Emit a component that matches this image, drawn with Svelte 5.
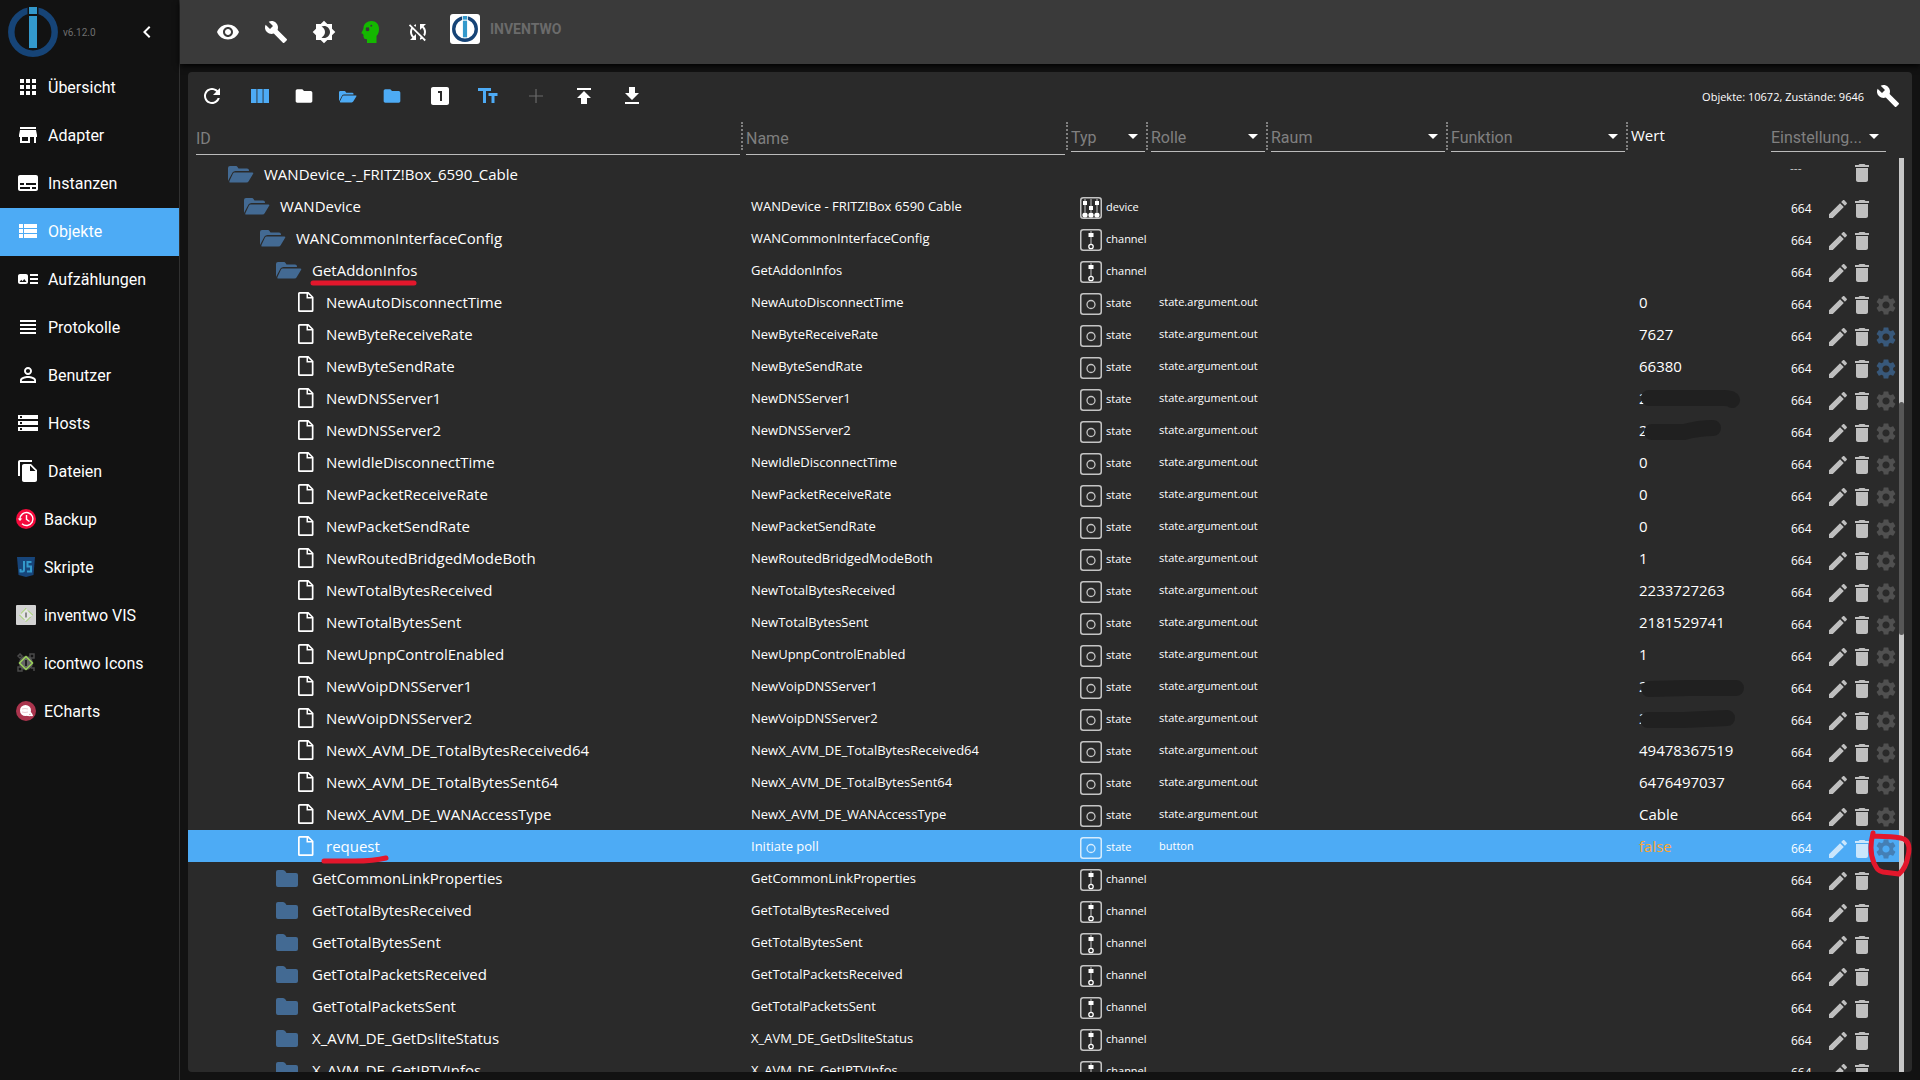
<script>
  const paths = {
    apps: 'M4 8h4V4H4v4zm6 12h4v-4h-4v4zm-6 0h4v-4H4v4zm0-6h4v-4H4v4zm6 0h4v-4h-4v4zm6-10v4h4V4h-4zm-6 4h4V4h-4v4zm6 6h4v-4h-4v4zm0 6h4v-4h-4v4z',
    store: 'M20 4H4v2h16V4zm1 10v-2l-1-5H4l-1 5v2h1v6h10v-6h4v6h2v-6h1zm-9 4H6v-4h6v4z',
    subtitles: 'M20 4H4c-1.1 0-2 .9-2 2v12c0 1.1.9 2 2 2h16c1.1 0 2-.9 2-2V6c0-1.1-.9-2-2-2zM4 12h4v2H4v-2zm10 6H4v-2h10v2zm6 0h-4v-2h4v2zm0-4H10v-2h10v2z',
    list: 'M3 9h4V5H3v4zm0 5h4v-4H3v4zm5 0h13v-4H8v4zm0 5h13v-4H8v4zM3 19h4v-4H3v4zM8 5v4h13V5H8z',
    artTrack: 'M22 13h-8v-2h8v2zm0-6h-8v2h8V7zm-8 10h8v-2h-8v2zm-2-8v6c0 1.1-.9 2-2 2H4c-1.1 0-2-.9-2-2V9c0-1.1.9-2 2-2h6c1.1 0 2 .9 2 2zm-1.5 6l-2.25-3-1.75 2.26-1.25-1.51L3.5 15h7z',
    headline: 'M4 15h16v-2H4v2zm0 4h16v-2H4v2zm0-8h16V9H4v2zm0-6v2h16V5H4z',
    person: 'M12 5.9a2.1 2.1 0 1 1 0 4.2 2.1 2.1 0 0 1 0-4.2m0 9c2.97 0 6.1 1.46 6.1 2.1v1.1H5.9V17c0-.64 3.13-2.1 6.1-2.1M12 4C9.79 4 8 5.79 8 8s1.79 4 4 4 4-1.79 4-4-1.79-4-4-4zm0 9c-2.67 0-8 1.34-8 4v3h16v-3c0-2.66-5.33-4-8-4z',
    storage: 'M2 20h20v-4H2v4zm2-3h2v2H4v-2zM2 4v4h20V4H2zm4 3H4V5h2v2zm-4 7h20v-4H2v4zm2-3h2v2H4v-2z',
    fileCopy: 'M16 1H4c-1.1 0-2 .9-2 2v14h2V3h12V1zm-1 4l6 6v10c0 1.1-.9 2-2 2H7.99C6.89 23 6 22.1 6 21l.01-14c0-1.1.89-2 1.99-2h7zm-1 7h5.5L14 6.5V12z',
    chevron: 'M15.41 7.41L14 6l-6 6 6 6 1.41-1.41L10.83 12z',
    eye: 'M12 4.5C7 4.5 2.73 7.61 1 12c1.73 4.39 6 7.5 11 7.5s9.27-3.11 11-7.5c-1.73-4.39-6-7.5-11-7.5zM12 17c-2.76 0-5-2.24-5-5s2.24-5 5-5 5 2.24 5 5-2.24 5-5 5zm0-8c-1.66 0-3 1.34-3 3s1.34 3 3 3 3-1.34 3-3-1.34-3-3-3z',
    wrench: 'M22.7 19l-9.1-9.1c.9-2.3.4-5-1.5-6.9-2-2-5-2.4-7.4-1.3L9 6 6 9 1.6 4.7C.4 7.1.9 10.1 2.9 12.1c1.9 1.9 4.6 2.4 6.9 1.5l9.1 9.1c.4.4 1 .4 1.4 0l2.3-2.3c.5-.4.5-1.1.1-1.4z',
    brightness: 'M20 8.69V4h-4.69L12 .69 8.69 4H4v4.69L.69 12 4 15.31V20h4.69L12 23.31 15.31 20H20v-4.69L23.31 12 20 8.69zM12 18c-.89 0-1.74-.2-2.5-.55C11.56 16.5 13 14.42 13 12s-1.44-4.5-3.5-5.45C10.26 6.2 11.11 6 12 6c3.31 0 6 2.69 6 6s-2.69 6-6 6z',
    head: 'M12.5 1C8 1 4.5 4 4.5 8.3c0 1.2-2 3.6-2 4.6 0 .6.7.8 1.5.9-.2.9.7 1.1.6 1.7-.4.5-.3 1 .1 1.5.2 2 1.3 2.3 3.3 2.2V23h9.5v-7c1.9-1.8 2.5-4.4 2.5-7 0-4.8-3-8-7.5-8zM7.6 7.2l1 .4.9-.4.7.9-.2 1 .5 1-.9.8-1 .4-1-.3-.9-.8.2-1-.2-1zm4.2-2.5l1 .1.6.8-.4 1-1.1.2-.7-.8z',
    syncOff: 'M10 6.35V4.26c-.8.21-1.55.54-2.23.96l1.46 1.46c.25-.12.5-.24.77-.33zm-7.14-.94l2.36 2.36C4.45 8.99 4 10.44 4 12c0 2.21.91 4.2 2.36 5.64L4 20h6v-6l-2.24 2.24C6.68 15.15 6 13.66 6 12c0-1 .25-1.94.68-2.77l8.08 8.08c-.25.13-.5.25-.77.34v2.09c.8-.21 1.55-.54 2.23-.96l2.36 2.36 1.27-1.27L4.14 4.14 2.86 5.41zM20 4h-6v6l2.24-2.24C17.32 8.85 18 10.34 18 12c0 1-.25 1.94-.68 2.77l1.46 1.46C19.55 15.01 20 13.56 20 12c0-2.21-.91-4.2-2.36-5.64L20 4z',
    refresh: 'M17.65 6.35C16.2 4.9 14.21 4 12 4c-4.42 0-7.99 3.58-7.99 8s3.57 8 7.99 8c3.73 0 6.84-2.55 7.73-6h-2.08c-.82 2.33-3.04 4-5.65 4-3.31 0-6-2.69-6-6s2.69-6 6-6c1.66 0 3.14.69 4.22 1.78L13 11h7V4l-2.35 2.35z',
    folder: 'M10 4H4c-1.1 0-1.99.9-1.99 2L2 18c0 1.1.9 2 2 2h16c1.1 0 2-.9 2-2V8c0-1.1-.9-2-2-2h-8l-2-2z',
    one: 'M19 3H5c-1.1 0-2 .9-2 2v14c0 1.1.9 2 2 2h14c1.1 0 2-.9 2-2V5c0-1.1-.9-2-2-2zm-5 14h-2V9h-2V7h4v10z',
    text: 'M2 4v3h5v12h3V7h5V4H2zm19.5 5h-9v3h3v7h3v-7h3V9z',
    plus: 'M19 12.6h-6.4V19h-1.2v-6.4H5v-1.2h6.4V5h1.2v6.4H19z',
    publish: 'M5 4v2h14V4H5zm0 10h4v6h6v-6h4l-7-7-7 7z',
    download: 'M19 9h-4V3H9v6H5l7 7 7-7zM5 18v2h14v-2H5z',
    arrow: 'M7 10l5 5 5-5z',
    file: 'M14.5 2H5.5Q4 2 4 3.5V20.500Q4 22 5.500 22H18Q19.500 22 19.500 20.500V7zM5.700 20.300V3.700H12.500V8.500H17.800V20.300zM14 3.900L17.300 7.100H14z',
    edit: 'M3 17.25V21h3.75L17.81 9.94l-3.75-3.75L3 17.25zM20.71 7.04c.39-.39.39-1.02 0-1.41l-2.34-2.34c-.39-.39-1.02-.39-1.41 0l-1.83 1.83 3.75 3.75 1.83-1.83z',
    trash: 'M6 19c0 1.1.9 2 2 2h8c1.1 0 2-.9 2-2V7H6v12zM19 4h-3.5l-1-1h-5l-1 1H5v2h14V4z',
    gear: 'M19.14 12.94c.04-.3.06-.61.06-.94 0-.32-.02-.64-.07-.94l2.03-1.58c.18-.14.23-.41.12-.61l-1.92-3.32c-.12-.22-.37-.29-.59-.22l-2.39.96c-.5-.38-1.03-.7-1.62-.94l-.36-2.54c-.04-.24-.24-.41-.48-.41h-3.84c-.24 0-.43.17-.47.41l-.36 2.54c-.59.24-1.13.57-1.62.94l-2.39-.96c-.22-.08-.47 0-.59.22L2.74 8.87c-.12.21-.08.47.12.61l2.03 1.58c-.05.3-.09.63-.09.94s.02.64.07.94l-2.03 1.58c-.18.14-.23.41-.12.61l1.92 3.32c.12.22.37.29.59.22l2.39-.96c.5.38 1.03.7 1.62.94l.36 2.54c.05.24.24.41.48.41h3.84c.24 0 .44-.17.47-.41l.36-2.54c.59-.24 1.13-.56 1.62-.94l2.39.96c.22.08.47 0 .59-.22l1.92-3.32c.12-.22.07-.47-.12-.61l-2.01-1.58zM12 15.6c-1.98 0-3.6-1.62-3.6-3.6s1.62-3.6 3.6-3.6 3.6 1.62 3.6 3.6-1.62 3.6-3.6 3.6z'
  };

  const menu = [
    { label: 'Übersicht', icon: 'apps' },
    { label: 'Adapter', icon: 'store' },
    { label: 'Instanzen', icon: 'subtitles' },
    { label: 'Objekte', icon: 'list' },
    { label: 'Aufzählungen', icon: 'artTrack' },
    { label: 'Protokolle', icon: 'headline' },
    { label: 'Benutzer', icon: 'person' },
    { label: 'Hosts', icon: 'storage' },
    { label: 'Dateien', icon: 'fileCopy' },
    { label: 'Backup', plugin: 'backup' },
    { label: 'Skripte', plugin: 'js' },
    { label: 'inventwo VIS', plugin: 'vis' },
    { label: 'icontwo Icons', plugin: 'icontwo' },
    { label: 'ECharts', plugin: 'echarts' }
  ];

  const topActions = [
    ['eye', 'Ansicht'],
    ['wrench', 'Systemeinstellungen'],
    ['brightness', 'Farbschema'],
    ['head', 'Expertenmodus'],
    ['syncOff', 'Synchronisierung']
  ];

  const filters = [
    { label: 'Typ', cls: 'type' },
    { label: 'Rolle', cls: 'role' },
    { label: 'Raum', cls: 'room' },
    { label: 'Funktion', cls: 'func' }
  ];

  const dataPoint = (id, value, extra = {}) => ({
    id, name: id, level: 4, type: 'state', role: 'state.argument.out', value, ...extra
  });
  const channel = (id, level = 3, open = false) => ({ id, name: id, level, type: 'channel', open });

  const rows = [
    { id: 'WANDevice_-_FRITZ!Box_6590_Cable', level: 0, open: true },
    { id: 'WANDevice', name: 'WANDevice - FRITZ!Box 6590 Cable', level: 1, type: 'device', open: true },
    channel('WANCommonInterfaceConfig', 2, true),
    { ...channel('GetAddonInfos', 3, true), mark: 'long' },
    dataPoint('NewAutoDisconnectTime', '0'),
    dataPoint('NewByteReceiveRate', '7627', { custom: true }),
    dataPoint('NewByteSendRate', '66380', { custom: true }),
    dataPoint('NewDNSServer1', '2', { hidden: 'M10 14H85Q92 14 93 16' }),
    dataPoint('NewDNSServer2', '2', { hidden: 'M13 16H45Q60 12 74 12' }),
    dataPoint('NewIdleDisconnectTime', '0'),
    dataPoint('NewPacketReceiveRate', '0'),
    dataPoint('NewPacketSendRate', '0'),
    dataPoint('NewRoutedBridgedModeBoth', '1'),
    dataPoint('NewTotalBytesReceived', '2233727263'),
    dataPoint('NewTotalBytesSent', '2181529741'),
    dataPoint('NewUpnpControlEnabled', '1'),
    dataPoint('NewVoipDNSServer1', '2', { hidden: 'M10 17L50 16H97' }),
    dataPoint('NewVoipDNSServer2', '2', { hidden: 'M9 16H45L88 14' }),
    dataPoint('NewX_AVM_DE_TotalBytesReceived64', '49478367519'),
    dataPoint('NewX_AVM_DE_TotalBytesSent64', '6476497037'),
    dataPoint('NewX_AVM_DE_WANAccessType', 'Cable'),
    dataPoint('request', 'false', { name: 'Initiate poll', role: 'button', mark: 'short' }),
    channel('GetCommonLinkProperties'),
    channel('GetTotalBytesReceived'),
    channel('GetTotalBytesSent'),
    channel('GetTotalPacketsReceived'),
    channel('GetTotalPacketsSent'),
    channel('X_AVM_DE_GetDsliteStatus'),
    channel('X_AVM_DE_GetIPTVInfos')
  ];

  let selected = $state('request');
</script>

{#snippet icon(name)}
  <svg class="icon" viewBox="0 0 24 24" aria-hidden="true"><path fill-rule="evenodd" d={paths[name]} /></svg>
{/snippet}

{#snippet logo()}
  <svg class="logo" viewBox="0 0 50 50" aria-hidden="true">
    <circle cx="25" cy="25" r="21.7" fill="none" stroke="#164477" stroke-width="6.5" />
    <rect class="logo-gap" x="19.5" width="11" height="10" />
    <rect x="21" y="0" width="8" height="7" fill="#3399cc" />
    <rect x="21" y="9" width="8" height="32" fill="#3399cc" />
  </svg>
{/snippet}

{#snippet openFolder()}
  <svg class="open-folder" viewBox="0 0 26 18" aria-hidden="true">
    <path d="M0 16V3Q0 1 2 1H8Q9 1 9.5 2L10.5 3.5H19Q21 3.5 21 5.5V6H7.5Q5.5 6 4.5 7.6L.5 15z" />
    <path d="M6.5 7.5H24.5Q26 7.5 25 9L20.8 16Q20 17.5 18.5 17.5H2Q.8 17.5 1.5 16L5 8.5Q5.5 7.5 6.5 7.5z" />
  </svg>
{/snippet}

{#snippet pluginIcon(kind)}
  <svg class="plugin" viewBox="0 0 20 20" aria-hidden="true">
    {#if kind === 'backup'}
      <circle cx="10" cy="10" r="10" fill="#f50a3c" />
      <path d="M4 10a6.5 6.5 0 1 1 2 4.7M10.500 6v4.300l3 2.200" fill="none" stroke="#fff" stroke-width="1.4" />
      <path d="M1.8 9.5h4.5L4 12z" fill="#fff" />
    {:else if kind === 'js'}
      <path d="M1 0h18l-1.5 18L10 20l-7.500-2z" fill="#17457a" />
      <path d="M8 4v9q0 1.500-1.500 1.500H4.500V12M15.500 5H11.500v4.500H15v5h-4" fill="none" stroke="#3399cc" stroke-width="2" />
    {:else if kind === 'vis'}
      <rect width="20" height="20" rx="1" fill="#d2d2d2" />
      <path d="M10 3.5L3.5 10 10 16.5 16.5 10z" fill="#e4e4e4" stroke="#9bd35a" stroke-dasharray="7 2" />
      <path d="M10 7.5v5" stroke="#333" />
    {:else if kind === 'icontwo'}
      <path d="M2 3l2-2 2 2-2 2zM14 1h4v4h-4zM2 14h4v4H2zM15 15h3v3" fill="none" stroke="#4a4a4a" stroke-width="1.5" />
      <circle cx="10" cy="10" r="7" fill="#555" />
      <path d="M10 3.5L3.5 10 10 16.5 16.5 10z" fill="#666" stroke="#9bd35a" stroke-width="1.5" />
      <path d="M10 7v6" stroke="#222" stroke-width="2" />
    {:else}
      <circle cx="10" cy="10" r="10" fill="#aa344d" />
      <circle cx="9.5" cy="9.5" r="5.5" fill="#fff" />
      <path d="M11 14q3 1 5.5-.5M14 11l2.5 4" fill="none" stroke="#fff" stroke-width="1.5" />
      <path d="M6 8q3-1 6 0M6 11q3 1 6 0" fill="none" stroke="#dca6b0" stroke-width=".6" />
    {/if}
  </svg>
{/snippet}

{#snippet typeIcon(type)}
  <svg class="type-icon" viewBox="0 0 22 22" aria-hidden="true">
    <rect x=".75" y=".75" width="20.5" height="20.5" rx="2.5" fill="none" stroke="currentColor" stroke-width="1.5" />
    {#if type === 'device'}
      <path d="M5 2v13M11 2v13M17 2v13" stroke="currentColor" />
      <path d="M3 4h4v4H3zM9 9h4v4H9zM15 4h4v4h-4z" fill="#fff" />
      <circle cx="5" cy="18" r="2.6" fill="#fff" />
      <circle cx="11" cy="18" r="2.6" fill="#fff" />
      <circle cx="17" cy="18" r="2.6" fill="#fff" />
    {:else if type === 'channel'}
      <path d="M11 2v13" stroke="currentColor" />
      <path d="M8.5 4h5v4h-5z" fill="#fff" />
      <circle cx="11" cy="17.5" r="2.2" fill="none" stroke="#fff" stroke-width="1.3" />
    {:else}
      <circle cx="11" cy="11.5" r="4" fill="none" stroke="currentColor" stroke-width="1.3" />
    {/if}
  </svg>
{/snippet}

<div class="app">
  <aside class="sidebar">
    <div class="brand">
      {@render logo()}
      <span class="version">v6.12.0</span>
      <button class="plain collapse" aria-label="Menü einklappen">{@render icon('chevron')}</button>
    </div>
    <nav>
      {#each menu as item}
        <a class="menu-item" class:active={item.label === 'Objekte'} href={'#' + item.label}>
          {#if item.plugin}
            {@render pluginIcon(item.plugin)}
          {:else}
            {@render icon(item.icon)}
          {/if}
          {item.label}
        </a>
      {/each}
    </nav>
  </aside>

  <div class="content">
    <header class="topbar">
      {#each topActions as [name, label]}
        <button class="plain tool" class:expert={name === 'head'} aria-label={label}>{@render icon(name)}</button>
      {/each}
      <div class="host">
        <span class="avatar">{@render logo()}</span>
        <span class="host-name">INVENTWO</span>
      </div>
    </header>

    <main class="panel">
      <div class="toolbar">
        <button class="plain tool" aria-label="Aktualisieren">{@render icon('refresh')}</button>
        <button class="plain tool primary" aria-label="Spalten">
          <svg class="icon" viewBox="0 0 24 24" aria-hidden="true">
            <path d="M3 5h5v14H3zM9.5 5h5v14h-5zM16 5h5v14h-5z" />
            <path d="M8 5h1.5v14H8zM14.5 5H16v14h-1.5z" opacity=".5" />
          </svg>
        </button>
        <button class="plain tool small" aria-label="Alle zuklappen">{@render icon('folder')}</button>
        <button class="plain tool small primary" aria-label="Alle aufklappen">{@render openFolder()}</button>
        <button class="plain tool small primary" aria-label="Ebene zuklappen">{@render icon('folder')}</button>
        <button class="plain tool" aria-label="Eine Ebene">{@render icon('one')}</button>
        <button class="plain tool primary" aria-label="Namen anzeigen">{@render icon('text')}</button>
        <button class="plain tool" disabled aria-label="Hinzufügen">{@render icon('plus')}</button>
        <button class="plain tool" aria-label="Importieren">{@render icon('publish')}</button>
        <button class="plain tool" aria-label="Exportieren">{@render icon('download')}</button>
        <span class="stats">Objekte: 10672, Zustände: 9646</span>
        <button class="plain tool config" aria-label="Spalten einstellen">{@render icon('wrench')}</button>
      </div>

      <div class="filters">
        <div class="filter id">
          <input type="text" placeholder="ID" aria-label="ID" />
          <span class="handle"></span>
        </div>
        <div class="filter name">
          <input type="text" placeholder="Name" aria-label="Name" />
          <span class="handle"></span>
        </div>
        {#each filters as filter}
          <div class="filter {filter.cls}">
            <div class="select">
              <select aria-label={filter.label}><option>{filter.label}</option></select>
              {@render icon('arrow')}
            </div>
            <span class="handle"></span>
          </div>
        {/each}
        <div class="filter value"><span class="value-title">Wert</span></div>
        <div class="filter settings">
          <div class="select">
            <select aria-label="Einstellungen"><option>Einstellung...</option></select>
            {@render icon('arrow')}
          </div>
        </div>
      </div>

      <div class="scroll">
        <table>
          <colgroup>
            <col class="id" /><col class="name" /><col class="type" /><col class="role" />
            <col class="room" /><col class="func" /><col class="value" /><col class="settings" />
          </colgroup>
          <tbody>
            {#each rows as row}
              <tr class:selected={row.id === selected} onclick={() => (selected = row.id)}>
                <td>
                  <div class="tree" style="padding-left: {40 + row.level * 16}px">
                    {#if row.type === 'state'}
                      <span class="tree-icon leaf">{@render icon('file')}</span>
                    {:else if row.open}
                      <span class="tree-icon">{@render openFolder()}</span>
                    {:else}
                      <span class="tree-icon">
                        <svg class="closed-folder" viewBox="0 0 22 17" aria-hidden="true">
                          <path d="M0 15V2Q0 0 2 0H7Q8.5 0 9.5 1.5L10.5 3H20Q22 3 22 5V15Q22 17 20 17H2Q0 17 0 15z" />
                        </svg>
                      </span>
                    {/if}
                    <span class="tree-label">
                      {row.id}
                      {#if row.mark}
                        <svg class="underline" viewBox="0 0 112 12" aria-hidden="true">
                          <path d={row.mark === 'long' ? 'M6 7H107' : 'M3 9H33Q53 9 65 6'} />
                        </svg>
                      {/if}
                    </span>
                  </div>
                </td>
                <td class="name-cell">{row.name ?? ''}</td>
                <td>
                  {#if row.type}
                    <div class="kind">{@render typeIcon(row.type)}<span>{row.type}</span></div>
                  {/if}
                </td>
                <td class="role-cell">{row.role ?? ''}</td>
                <td></td>
                <td></td>
                <td class="value-cell" class:unconfirmed={row.value === 'false'}>
                  {row.value ?? ''}
                  {#if row.hidden}
                    <svg class="redaction" viewBox="0 0 110 28" aria-hidden="true"><path d={row.hidden} /></svg>
                  {/if}
                </td>
                <td>
                  <div class="actions" class:virtual={!row.type}>
                    {#if row.type}
                      <span class="acl">664</span>
                      <button class="plain" aria-label="Bearbeiten">{@render icon('edit')}</button>
                    {:else}
                      <span class="acl none">---</span>
                    {/if}
                    <button class="plain" aria-label="Löschen">{@render icon('trash')}</button>
                    <span class="gear-slot">
                      {#if row.type === 'state'}
                        <button class="plain gear" class:custom={row.custom} aria-label="Benutzerdefiniert">{@render icon('gear')}</button>
                      {/if}
                      {#if row.mark === 'short'}
                        <svg class="circle" viewBox="0 0 48 52" aria-hidden="true">
                          <path d="M8 5C5 17 5 26 9 35C12 41 13 43 18 44L34 46C40 41 42 34 43 28C45 20 44 14 39 11C30 8 20 9 8 8" />
                        </svg>
                      {/if}
                    </span>
                  </div>
                </td>
              </tr>
            {/each}
          </tbody>
        </table>
        <div class="track"><div class="thumb"></div></div>
      </div>
    </main>
  </div>
</div>

<style>
  :global(body) {
    background: #121212;
  }
  .app {
    --primary: #4dabf5;
    --folder: #436a93;
    display: flex;
    height: 100vh;
    overflow: hidden;
    color: #fff;
    font-family: 'Open Sans', 'Noto Sans', sans-serif;
    font-size: 15px;
  }
  .icon {
    display: block;
    width: 24px;
    height: 24px;
    flex: none;
    fill: currentColor;
  }
  .plain {
    display: flex;
    align-items: center;
    justify-content: center;
    padding: 0;
    border: none;
    background: none;
    color: inherit;
    cursor: pointer;
  }

  /* sidebar */
  .sidebar {
    flex: none;
    width: 179px;
    border-right: 1px solid #303030;
    font-family: Roboto, sans-serif;
  }
  .brand {
    display: flex;
    align-items: center;
    height: 64px;
    padding: 0 20px 0 8px;
  }
  .logo {
    display: block;
    width: 50px;
    height: 50px;
  }
  .logo-gap {
    fill: #121212;
  }
  .version {
    margin-left: 5px;
    font-size: 10px;
    color: #6f6f6f;
  }
  .collapse {
    margin-left: auto;
  }
  .menu-item {
    display: flex;
    align-items: center;
    gap: 8px;
    box-sizing: border-box;
    height: 48px;
    padding: 0 0 2px 16px;
    color: #fff;
    font-size: 16px;
    text-decoration: none;
  }
  .menu-item.active {
    background: var(--primary);
  }
  .plugin {
    width: 20px;
    height: 20px;
  }

  /* top bar */
  .content {
    display: flex;
    flex-direction: column;
    flex: 1;
    min-width: 0;
  }
  .topbar {
    display: flex;
    align-items: center;
    flex: none;
    height: 64px;
    padding-left: 24px;
    background: #3a3a3a;
    box-shadow: 0 2px 6px #000;
  }
  .tool {
    width: 48px;
    height: 48px;
  }
  .expert {
    width: 46px;
    color: #14b800;
  }
  .host {
    display: flex;
    align-items: center;
    gap: 10px;
    height: 30px;
    margin: 0 0 6px 8px;
  }
  .avatar {
    display: flex;
    align-items: center;
    justify-content: center;
    width: 30px;
    height: 30px;
    border-radius: 3px;
    background: #fff;
  }
  .avatar .logo {
    width: 26px;
    height: 26px;
  }
  .avatar .logo-gap {
    fill: #fff;
  }
  .host-name {
    font: 700 14px Roboto, sans-serif;
    color: #6b6b6b;
  }

  /* object list */
  .panel {
    display: flex;
    flex-direction: column;
    flex: 1;
    min-height: 0;
    margin: 8px;
    border-radius: 4px;
    overflow: hidden;
    background: #2a2a2a;
  }
  .toolbar {
    display: flex;
    align-items: center;
    flex: none;
    height: 48px;
  }
  .primary {
    color: var(--primary);
  }
  .small {
    width: 44px;
    padding-right: 4px;
  }
  .small .icon {
    width: 20px;
    height: 20px;
  }
  .small .open-folder {
    width: 18px;
    height: 13px;
    fill: currentColor;
  }
  .tool:disabled {
    color: #6a6a6a;
  }
  .stats {
    margin-left: auto;
    font-size: 11px;
  }
  .config {
    width: 24px;
    margin: 0 12px;
  }

  .filters {
    display: flex;
    flex: none;
    height: 38px;
    padding-right: 13px;
    font-family: Roboto, sans-serif;
    font-size: 16px;
  }
  .filter {
    display: flex;
    align-items: flex-start;
    box-sizing: border-box;
    flex: none;
    padding-left: 3px;
  }
  .id.filter {
    flex: 1;
    min-width: 0;
    padding-left: 8px;
  }
  .name {
    width: 325px;
  }
  .type {
    width: 80px;
  }
  .role {
    width: 120px;
  }
  .room,
  .func {
    width: 180px;
  }
  .value {
    width: 140px;
  }
  .settings {
    width: 131px;
  }
  .settings.filter {
    padding-right: 13px;
  }
  .filter input {
    flex: 1;
    min-width: 0;
    height: 35px;
    box-sizing: border-box;
    padding: 2px 0 0;
    border: none;
    border-bottom: 1px solid #bbb;
    outline: none;
    background: none;
    color: #fff;
    font: inherit;
  }
  .filter input::placeholder {
    color: #7f7f7f;
  }
  .handle {
    height: 28px;
    margin: 2px 0 0 1px;
    border-right: 2px dotted #808080;
  }
  .select {
    display: grid;
    grid-template-columns: minmax(0, 1fr) 24px;
    align-items: center;
    flex: 1;
    height: 31px;
    border-bottom: 1px solid #bbb;
  }
  .select select {
    grid-area: 1 / 1 / 2 / 3;
    appearance: none;
    width: 100%;
    padding: 4px 0 0;
    border: none;
    background: none;
    color: #808080;
    font: inherit;
  }
  .select .icon {
    grid-area: 1 / 2;
    pointer-events: none;
  }
  .value-title {
    padding-top: 5px;
    font: 15px 'Open Sans', sans-serif;
  }

  .scroll {
    display: flex;
    align-items: stretch;
    flex: 1;
    min-height: 0;
    padding-right: 8px;
    overflow: hidden;
  }
  .track {
    display: flow-root;
    flex: none;
    width: 5px;
    background: #c8c8c8;
  }
  .thumb {
    height: 233px;
    margin-top: 244px;
    border-radius: 3px;
    background: #575757;
  }
  table {
    flex: 1;
    align-self: flex-start;
    width: 0;
    table-layout: fixed;
    border-collapse: collapse;
  }
  td {
    height: 32px;
    padding: 0;
    line-height: 20px;
    white-space: nowrap;
  }
  tr.selected {
    background: var(--primary);
  }
  .tree {
    display: flex;
    align-items: center;
    height: 32px;
  }
  .tree-icon {
    width: 36px;
  }
  .leaf {
    box-sizing: border-box;
    width: 34px;
    padding-left: 2px;
  }
  .open-folder {
    display: block;
    width: 26px;
    height: 18px;
  }
  .closed-folder {
    display: block;
    width: 22px;
    height: 17px;
  }
  .tree-icon .open-folder,
  .closed-folder {
    fill: var(--folder);
  }
  .tree-label {
    position: relative;
  }
  .underline {
    position: absolute;
    left: -5px;
    top: 16px;
    width: 112px;
    height: 12px;
  }
  .underline path,
  .circle path {
    fill: none;
    stroke: #e3172c;
    stroke-width: 5;
    stroke-linecap: round;
    stroke-linejoin: round;
  }
  .name-cell {
    padding-left: 8px;
    font-size: 13px;
  }
  .kind {
    display: flex;
    align-items: center;
    gap: 4px;
    padding: 4px 0 0 12px;
    font-size: 11px;
  }
  .kind span {
    padding-bottom: 2px;
  }
  .type-icon {
    flex: none;
    width: 22px;
    height: 22px;
    color: #c4c4c4;
  }
  .selected .type-icon {
    color: #d6ecfd;
  }
  .role-cell {
    padding-left: 11px;
    font-size: 11px;
  }
  .value-cell {
    position: relative;
    padding-left: 11px;
  }
  .unconfirmed {
    color: #ffa530;
  }
  .redaction {
    position: absolute;
    left: 11px;
    top: 2px;
    width: 110px;
    height: 28px;
  }
  .redaction path {
    fill: none;
    stroke: #202020;
    stroke-width: 16;
    stroke-linecap: round;
    stroke-linejoin: round;
  }
  .actions {
    display: flex;
    align-items: center;
    box-sizing: border-box;
    height: 32px;
    padding: 6px 1px 0 23px;
    font-size: 12px;
  }
  .actions.virtual {
    padding: 0 1px 2px 22px;
  }
  .acl {
    flex: 1;
  }
  .acl.none {
    padding-bottom: 8px;
    color: #bbb;
  }
  .actions .plain {
    color: rgba(255, 255, 255, 0.7);
  }
  .gear-slot {
    position: relative;
    width: 24px;
    height: 24px;
  }
  .actions .gear {
    color: #505050;
  }
  .actions .gear.custom {
    color: #38587a;
  }
  .selected .actions .gear {
    color: #447fb5;
  }
  .circle {
    position: absolute;
    left: -9px;
    top: -9px;
    width: 48px;
    height: 52px;
    z-index: 1;
  }
</style>
